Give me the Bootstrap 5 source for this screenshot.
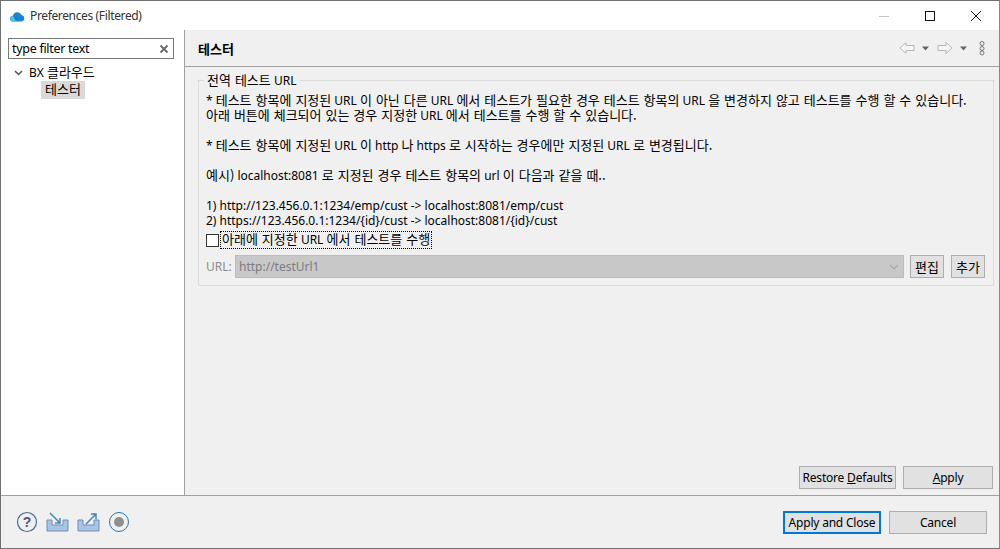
<!DOCTYPE html>
<html lang="ko"><head><meta charset="utf-8"><title>Preferences (Filtered)</title>
<link rel="stylesheet" href="https://cdn.jsdelivr.net/npm/bootstrap@5.3.0/dist/css/bootstrap.min.css">
<style>
html,body{height:549px;overflow:hidden;margin:0}
body{font:12px/15px "Noto Sans","Noto Sans CJK KR",sans-serif;color:#000;background:#f0f0f0}
.ko{font-size:13px;line-height:1;word-spacing:.35px;font-family:"Noto Sans CJK KR","Noto Sans",sans-serif}
.win{height:549px;border:1px solid #707070;border-right-color:#888}
.titlebar{height:29px;background:#fff;color:#333}
.wtitle{font-size:12px;margin-left:5px;letter-spacing:-.36px}
.wbtn{width:46px;height:29px}
.mainrow{height:466px;border-bottom:1px solid #a0a0a0}
.sidepane{width:184px;background:#fff;border-right:1px solid #a0a0a0;padding:8px 10px 0 7px}
.filter{height:21px;border:1px solid #7a7a7a;padding:0 4px 0 3px;font-size:12.5px;line-height:19px;letter-spacing:-.3px}
.tree{padding-top:5px;font-size:12px}
.treerow{height:17px;line-height:17px}
.treelabel{margin-left:6px}
.treechev{margin-left:6px}
.selitem{display:inline-block;background:#d9d9d9;margin-left:33px;padding:0 4px;height:18px;line-height:17px}
.contentpane{min-width:0}
.phead{height:37px;padding:0 8px 0 13px;border-bottom:1px solid #a0a0a0;font-weight:700}
.pbody{padding:13px 6px 6px 13px}
.grp{border:1px solid #dcdcdc;height:206px;margin-right:-1px;padding:12px 8px 0 7px;position:relative}
.grplabel{position:absolute;left:5px;top:-8px;background:#f0f0f0;padding:0 3px;line-height:15px}
.para{margin:0;height:135px;white-space:pre;letter-spacing:-.01px}
.chkrow{margin-top:4px;height:16px}
.chkbox{width:13px;height:13px;border:1px solid #333;background:#fff}
.chklabel{outline:1px dotted #000;outline-offset:0;margin-left:2px;padding:0 1px;line-height:16px;height:16px}
.urlrow{margin-top:7px;height:23px}
.urllabel{color:#8d8d8d;width:29px}
.urlsel{height:23px;background:#c8c8c8;border:1px solid #bcbcbc;color:#7d7d7d;padding:0 4px 0 3px;font-size:12px;line-height:21px}
.ebtn{height:23px;width:34px;padding:0;border:1px solid #adadad;background:#e1e1e1;line-height:21px;color:#000;border-radius:0}
.ebtn1{margin-left:6px}
.ebtn2{margin-left:7px}
.pbtn{height:23px;border:1px solid #adadad;background:#e1e1e1;border-radius:0;padding:0;font-size:12px;line-height:21px;color:#000;letter-spacing:-.2px}
.rd{width:97px}.ap{width:90px}
.gap7{gap:7px}
.fbtn{width:98px}
.fbtn-def{border:2px solid #0078d7;line-height:19px}
.fbtns{margin-top:2px}
.footerbar{height:51px;padding:0 12px 0 15px}
</style></head><body>
<div class="win d-flex flex-column">
 <div class="titlebar d-flex align-items-center">
  <svg width="16" height="12" viewBox="0 0 16 12" class="ms-2"><path d="M3.500 11.500A3 3 0 0 1 1 8.500 3 3 0 0 1 4 5.800 4.500 4.500 0 0 1 12.500 5 3.300 3.300 0 0 1 12.500 11.500Z" fill="#1c82d4"/><path d="M3.500 11.500A3 3 0 0 1 1 8.500 3 3 0 0 1 4 5.800L7 11.500Z" fill="#4dc3e0"/></svg>
  <span class="wtitle">Preferences (Filtered)</span>
  <div class="ms-auto d-flex">
   <div class="wbtn d-flex align-items-center justify-content-center"><svg width="12" height="12"><path d="M1 6.500H11" stroke="#c4c4c4"/></svg></div>
   <div class="wbtn d-flex align-items-center justify-content-center"><svg width="12" height="12"><rect x="1.500" y="1.500" width="9" height="9" fill="none" stroke="#111"/></svg></div>
   <div class="wbtn d-flex align-items-center justify-content-center"><svg width="12" height="12"><path d="M1 1L11 11M11 1L1 11" stroke="#111" fill="none"/></svg></div>
  </div>
 </div>
 <div class="mainrow d-flex">
  <div class="sidepane flex-shrink-0">
   <div class="filter d-flex align-items-center justify-content-between"><span>type filter text</span><svg width="10" height="10"><path d="M1.500 1.500L8.500 8.500M8.500 1.500L1.500 8.500" stroke="#6e6e6e" stroke-width="2"/></svg></div>
   <div class="tree">
    <div class="treerow d-flex align-items-center"><svg width="9" height="6" viewBox="0 0 9 6" class="treechev"><path d="M1 1L4.500 4.500L8 1" fill="none" stroke="#555" stroke-width="1.500"/></svg><span class="treelabel">BX <span class="ko">클라우드</span></span></div>
    <div class="selitem"><span class="ko">테스터</span></div>
   </div>
  </div>
  <div class="contentpane flex-grow-1 d-flex flex-column">
   <div class="phead d-flex align-items-center justify-content-between">
    <span class="ko">테스터</span>
    <svg width="92" height="16" viewBox="0 0 92 16">
     <path d="M1 8L7 2.500V5.500H15V10.500H7V13.500Z" fill="#f6f6f6" stroke="#b8b8b8"/><path d="M23 6.500h7l-3.500 4z" fill="#666"/>
     <path d="M53 8L47 2.500V5.500H39V10.500H47V13.500Z" fill="#f6f6f6" stroke="#b8b8b8"/><path d="M61 6.500h7l-3.500 4z" fill="#666"/>
     <g fill="none" stroke="#777"><circle cx="83" cy="3.500" r="2"/><circle cx="83" cy="8.500" r="2"/><circle cx="83" cy="13" r="2"/></g>
    </svg>
   </div>
   <div class="pbody flex-grow-1 d-flex flex-column">
    <div class="grp">
     <span class="grplabel"><span class="ko">전역 테스트</span> URL</span>
     <p class="para">* <span class="ko">테스트 항목에 지정된</span> URL <span class="ko">이 아닌 다른</span> URL <span class="ko">에서 테스트가 필요한 경우 테스트 항목의</span> URL <span class="ko">을 변경하지 않고 테스트를 수행 할 수 있습니다.</span>
<span class="ko">아래 버튼에 체크되어 있는 경우 지정한</span> URL <span class="ko">에서 테스트를 수행 할 수 있습니다.</span>

* <span class="ko">테스트 항목에 지정된</span> URL <span class="ko">이</span> http <span class="ko">나</span> https <span class="ko">로 시작하는 경우에만 지정된</span> URL <span class="ko">로 변경됩니다.</span>

<span class="ko">예시)</span> localhost:8081 <span class="ko">로 지정된 경우 테스트 항목의</span> url <span class="ko">이 다음과 같을 때..</span>

1) http://123.456.0.1:1234/emp/cust -&gt; localhost:8081/emp/cust
2) https://123.456.0.1:1234/{id}/cust -&gt; localhost:8081/{id}/cust</p>
     <div class="chkrow d-flex align-items-center"><span class="chkbox d-inline-block flex-shrink-0"></span><span class="chklabel"><span class="ko">아래에 지정한</span> URL <span class="ko">에서 테스트를 수행</span></span></div>
     <div class="urlrow d-flex align-items-center">
      <span class="urllabel">URL:</span>
      <div class="urlsel flex-grow-1 d-flex align-items-center justify-content-between"><span>http://testUrl1</span><svg width="10" height="6"><path d="M1 1L5 5L9 1" fill="none" stroke="#a8a8a8" stroke-width="1.200"/></svg></div>
      <button class="btn ebtn ebtn1" type="button"><span class="ko">편집</span></button>
      <button class="btn ebtn ebtn2" type="button"><span class="ko">추가</span></button>
     </div>
    </div>
    <div class="mt-auto d-flex justify-content-end gap7">
     <button class="btn pbtn rd" type="button">Restore <u>D</u>efaults</button>
     <button class="btn pbtn ap" type="button"><u>A</u>pply</button>
    </div>
   </div>
  </div>
 </div>
 <div class="footerbar d-flex align-items-center justify-content-between">
  <div class="d-flex align-items-center gap-2">
   <svg width="22" height="22" viewBox="0 0 22 22"><circle cx="11" cy="11" r="9.500" fill="none" stroke="#4a6a94" stroke-width="1.200"/><text x="11" y="16" text-anchor="middle" font-family="Liberation Sans" font-weight="700" font-size="14" fill="#45597a">?</text></svg>
   <svg width="23" height="20" viewBox="0 0 23 20"><path d="M1 8h5v5h11V8h5v11H1Z" fill="#a9c4e4" stroke="#6c8fbb"/><path d="M4 1L14 11M14 6V11H9" fill="none" stroke="#3f88b8" stroke-width="1.500"/></svg>
   <svg width="23" height="20" viewBox="0 0 23 20"><path d="M1 8h5v5h11V8h5v11H1Z" fill="#a9c4e4" stroke="#6c8fbb"/><path d="M9 12L19 2M14 2H19V7" fill="none" stroke="#3f88b8" stroke-width="1.500"/></svg>
   <svg width="22" height="22" viewBox="0 0 22 22"><circle cx="11" cy="11" r="9.500" fill="none" stroke="#2a76b0" stroke-width="1"/><circle cx="11" cy="11" r="5" fill="#8f8f8f"/></svg>
  </div>
  <div class="d-flex gap-2 fbtns">
   <button class="btn pbtn fbtn fbtn-def" type="button">Apply and Close</button>
   <button class="btn pbtn fbtn" type="button">Cancel</button>
  </div>
 </div>
</div>
<script src="https://cdn.jsdelivr.net/npm/bootstrap@5.3.0/dist/js/bootstrap.bundle.min.js"></script>
</body></html>
